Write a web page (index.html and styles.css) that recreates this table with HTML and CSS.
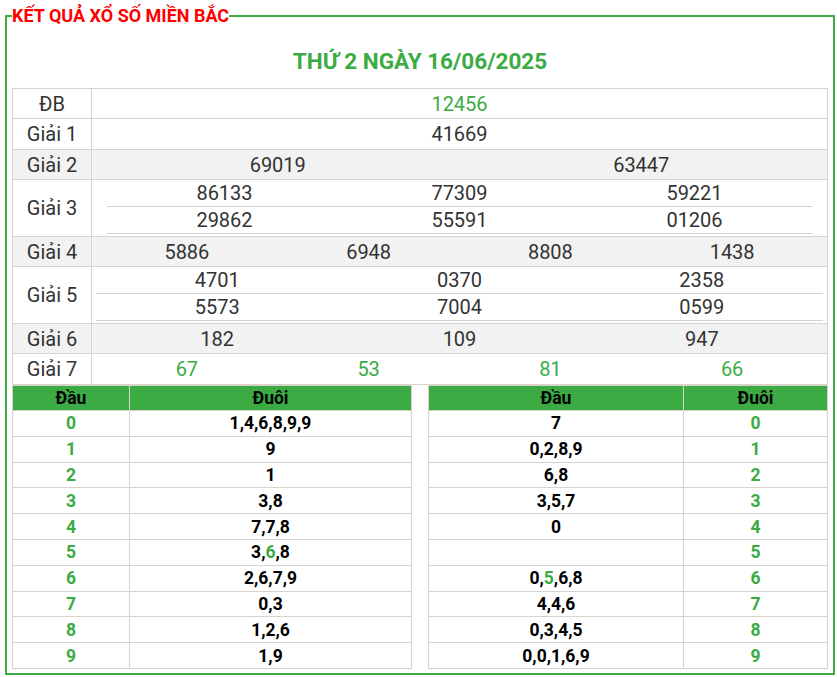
FILE: index.html
```html
<!DOCTYPE html>
<html lang="vi">
<head>
<meta charset="utf-8">
<title>Kết quả xổ số miền Bắc</title>
<link rel="stylesheet" href="styles.css">
</head>
<body>
<fieldset class="box">
  <legend class="box-title">KẾT QUẢ XỔ SỐ MIỀN BẮC</legend>
  <h2 class="date">THỨ 2 NGÀY 16/06/2025</h2>
  <table class="kq">
    <tr class="r1"><td class="lbl">ĐB</td><td class="val"><div class="cols"><span class="green">12456</span></div></td></tr>
    <tr class="r1b"><td class="lbl">Giải 1</td><td class="val"><div class="cols"><span>41669</span></div></td></tr>
    <tr class="alt r1"><td class="lbl">Giải 2</td><td class="val"><div class="cols"><span>69019</span><span>63447</span></div></td></tr>
    <tr class="r2"><td class="lbl">Giải 3</td><td class="val multi">
      <div class="cols line m15"><span>86133</span><span>77309</span><span>59221</span></div>
      <div class="cols line m15"><span>29862</span><span>55591</span><span>01206</span></div>
    </td></tr>
    <tr class="alt r1"><td class="lbl">Giải 4</td><td class="val"><div class="cols"><span>5886</span><span>6948</span><span>8808</span><span>1438</span></div></td></tr>
    <tr class="r2"><td class="lbl">Giải 5</td><td class="val multi">
      <div class="cols line"><span>4701</span><span>0370</span><span>2358</span></div>
      <div class="cols line"><span>5573</span><span>7004</span><span>0599</span></div>
    </td></tr>
    <tr class="alt r1"><td class="lbl">Giải 6</td><td class="val"><div class="cols"><span>182</span><span>109</span><span>947</span></div></td></tr>
    <tr class="r1b"><td class="lbl">Giải 7</td><td class="val"><div class="cols green"><span>67</span><span>53</span><span>81</span><span>66</span></div></td></tr>
  </table>
  <div class="loto">
    <table class="dt dt-left">
      <tr><th class="c1">Đầu</th><th>Đuôi</th></tr>
      <tr><td class="g">0</td><td>1,4,6,8,9,9</td></tr>
      <tr><td class="g">1</td><td>9</td></tr>
      <tr><td class="g">2</td><td>1</td></tr>
      <tr><td class="g">3</td><td>3,8</td></tr>
      <tr><td class="g">4</td><td>7,7,8</td></tr>
      <tr><td class="g">5</td><td>3,<span class="g">6</span>,8</td></tr>
      <tr><td class="g">6</td><td>2,6,7,9</td></tr>
      <tr><td class="g">7</td><td>0,3</td></tr>
      <tr><td class="g">8</td><td>1,2,6</td></tr>
      <tr><td class="g">9</td><td>1,9</td></tr>
    </table>
    <table class="dt dt-right">
      <tr><th class="c1">Đầu</th><th>Đuôi</th></tr>
      <tr><td>7</td><td class="g">0</td></tr>
      <tr><td>0,2,8,9</td><td class="g">1</td></tr>
      <tr><td>6,8</td><td class="g">2</td></tr>
      <tr><td>3,5,7</td><td class="g">3</td></tr>
      <tr><td>0</td><td class="g">4</td></tr>
      <tr><td></td><td class="g">5</td></tr>
      <tr><td>0,<span class="g">5</span>,6,8</td><td class="g">6</td></tr>
      <tr><td>4,4,6</td><td class="g">7</td></tr>
      <tr><td>0,3,4,5</td><td class="g">8</td></tr>
      <tr><td>0,0,1,6,9</td><td class="g">9</td></tr>
    </table>
  </div>
</fieldset>
</body>
</html>
```

FILE: styles.css
```css
* { box-sizing: border-box; }
html, body { margin: 0; padding: 0; background: #fff; }
body { font-family: Roboto, "Liberation Sans", sans-serif; }

.box {
  margin: 6px 2px 2px 5px;
  border: 2px solid #3cab44;
  padding: 0 5px 4px 5px;
  min-width: 0;
}
.box-title {
  padding: 0;
  font-size: 18px;
  line-height: 20px;
  font-weight: 700;
  color: #ff0000;
}
.date {
  margin: 20px 0 12px;
  text-align: center;
  font-size: 22.5px;
  line-height: 30px;
  font-weight: 700;
  color: #3cab44;
}

.kq {
  width: 100%;
  border-collapse: collapse;
  font-size: 20px;
  color: #333;
}
.kq td {
  border: 1px solid #d9d3cc;
  padding: 0;
  text-align: center;
  vertical-align: middle;
}
.kq .lbl { width: 79px; }
.kq .r1 td { height: 30px; }
.kq .r1b td { height: 31px; }
.kq .r2 td { height: 57px; }
.kq .alt td { background: #f2f2f2; }
.kq .multi { padding-bottom: 2px; vertical-align: top; }

.cols {
  display: grid;
  grid-auto-columns: 1fr;
  grid-auto-flow: column;
  line-height: 26px;
  margin: 0 4px;
}
.line { border-bottom: 1px solid #d3d3d3; }
.cols.m15 { margin: 0 15px; }
.green { color: #3cab44; }

.loto {
  display: flex;
  justify-content: space-between;
}
.dt {
  width: 400px;
  border-collapse: collapse;
  font-size: 17.5px;
  font-weight: 700;
  color: #000;
}
.dt th, .dt td {
  border: 1px solid #d9d3cc;
  padding: 0;
  text-align: center;
  vertical-align: middle;
}
.dt th {
  background: #3cab44;
  height: 25px;
  color: #000;
}
.dt td { height: 25.8px; }
.dt-left .c1 { width: 117px; }
.dt-right .c1 { width: 255px; }
.dt .g { color: #3cab44; }
```
